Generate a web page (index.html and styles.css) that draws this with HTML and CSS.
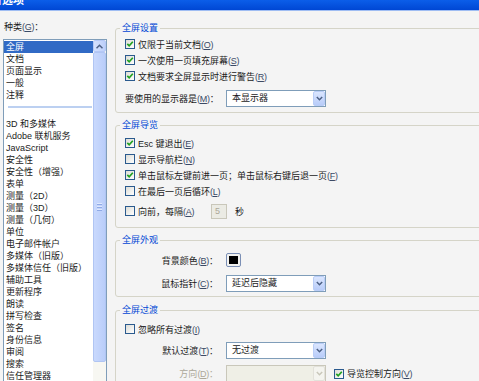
FILE: index.html
```html
<!doctype html>
<html>
<head>
    <meta charset="utf-8" />
    <title>首选项</title>
    <link rel="stylesheet" href="styles.css">
</head>
<body>
    <div class="titlebar"><span>首选项</span></div>

    <div class="dialog">
        <div class="side">
            <div class="cat-label">种类<span class="mn">(<u>G</u>)</span>：</div>
            <div class="listbox">
                <ul class="items">
                    <li class="on">全屏</li>
                    <li>文档</li>
                    <li>页面显示</li>
                    <li>一般</li>
                    <li>注释</li>
                    <li class="sep"></li>
                    <li>3D 和多媒体</li>
                    <li>Adobe 联机服务</li>
                    <li>JavaScript</li>
                    <li>安全性</li>
                    <li>安全性（增强）</li>
                    <li>表单</li>
                    <li>测量（2D）</li>
                    <li>测量（3D）</li>
                    <li>测量（几何）</li>
                    <li>单位</li>
                    <li>电子邮件帐户</li>
                    <li>多媒体（旧版）</li>
                    <li>多媒体信任（旧版）</li>
                    <li>辅助工具</li>
                    <li>更新程序</li>
                    <li>朗读</li>
                    <li>拼写检查</li>
                    <li>签名</li>
                    <li>身份信息</li>
                    <li>审阅</li>
                    <li>搜索</li>
                    <li>信任管理器</li>
                    <li>跟踪器</li>
                </ul>
                <div class="scrollbar">
                    <div class="sb-up">
                        <svg width="7" height="5" viewBox="0 0 7 5"><path d="M0.5 4.2 L3.5 1.2 L6.5 4.2" fill="none" stroke="#4d6185" stroke-width="1.5"/></svg>
                    </div>
                    <div class="sb-thumb"><i></i><i></i><i></i></div>
                    <div class="sb-track"></div>
                </div>
            </div>
        </div>

        <div class="main">
            <div class="group g1">
                <div class="group-title">全屏设置</div>
                <div class="rows">
                    <div class="row"><span class="cb checked"></span><span>仅限于当前文档<span class="mn">(<u>O</u>)</span></span></div>
                    <div class="row"><span class="cb checked"></span><span>一次使用一页填充屏幕<span class="mn">(<u>S</u>)</span></span></div>
                    <div class="row"><span class="cb checked"></span><span>文档要求全屏显示时进行警告<span class="mn">(<u>R</u>)</span></span></div>
                </div>
                <div class="field">
                    <span class="lbl left">要使用的显示器是<span class="mn">(<u>M</u>)</span>：</span>
                    <div class="combo"><span class="combo-text">本显示器</span><span class="combo-btn"></span></div>
                </div>
            </div>

            <div class="group g2">
                <div class="group-title">全屏导览</div>
                <div class="rows">
                    <div class="row"><span class="cb checked"></span><span>Esc 键退出<span class="mn">(<u>E</u>)</span></span></div>
                    <div class="row"><span class="cb"></span><span>显示导航栏<span class="mn">(<u>N</u>)</span></span></div>
                    <div class="row"><span class="cb checked"></span><span>单击鼠标左键前进一页；单击鼠标右键后退一页<span class="mn">(<u>F</u>)</span></span></div>
                    <div class="row"><span class="cb"></span><span>在最后一页后循环<span class="mn">(<u>L</u>)</span></span></div>
                </div>
                <div class="row interval">
                    <span class="cb"></span><span class="interval-text">向前，每隔<span class="mn">(<u>A</u>)</span></span>
                    <span class="num">5</span>
                    <span class="sec">秒</span>
                </div>
            </div>

            <div class="group g3">
                <div class="group-title">全屏外观</div>
                <div class="field swatch-row">
                    <span class="lbl">背景颜色<span class="mn">(<u>B</u>)</span>：</span>
                    <span class="swatch"><i></i></span>
                </div>
                <div class="field pointer-row">
                    <span class="lbl">鼠标指针<span class="mn">(<u>C</u>)</span>：</span>
                    <div class="combo"><span class="combo-text">延迟后隐藏</span><span class="combo-btn"></span></div>
                </div>
            </div>

            <div class="group g4">
                <div class="group-title">全屏过渡</div>
                <div class="row"><span class="cb"></span><span>忽略所有过渡<span class="mn">(<u>I</u>)</span></span></div>
                <div class="field trans-row">
                    <span class="lbl">默认过渡<span class="mn">(<u>T</u>)</span>：</span>
                    <div class="combo"><span class="combo-text">无过渡</span><span class="combo-btn"></span></div>
                </div>
                <div class="field dir-row">
                    <span class="lbl off">方向<span class="mn">(<u>D</u>)</span>：</span>
                    <div class="combo disabled"><span class="combo-text"></span><span class="combo-btn"></span></div>
                    <span class="row nav-dir"><span class="cb checked"></span><span>导览控制方向<span class="mn">(<u>V</u>)</span></span></span>
                </div>
            </div>
        </div>
    </div>
</body>
</html>
```

FILE: styles.css
```css
html, body{
    margin:0;
    padding:0;
}
body{
    width:479px;
    height:381px;
    overflow:hidden;
    background:#f4f4f4;
    color:#1a1a1a;
    font-family:"Liberation Sans", "Noto Sans CJK SC", sans-serif;
    font-size:9px;
    text-autospace:no-autospace;
}
u{
    text-underline-offset:1px;
}
.mn{
    font-family:"Liberation Sans", sans-serif;
    letter-spacing:-0.3px;
    color:#3a4a66;
}

.titlebar{
    height:10px;
    overflow:hidden;
    background:linear-gradient(#0b5ee9, #0047d4);
    border-bottom:1px solid #9fbdf3;
}
.titlebar span{
    display:block;
    margin:-7px 0 0 -9px;
    line-height:14px;
    font-size:11px;
    font-weight:bold;
    color:#fff;
}

.dialog{
    display:flex;
}

/* 左侧种类列表 */
.side{
    flex:none;
    margin-left:3px;
    width:104px;
}
.cat-label{
    margin-top:10px;
    margin-bottom:6px;
    padding-left:1px;
    line-height:12px;
}
.listbox{
    display:flex;
    height:360px;
    border:1px solid #7f9db9;
    background:#fff;
}
.items{
    flex:1;
    margin:0;
    padding:1px 0 0 0;
    list-style:none;
}
.items li{
    height:12px;
    line-height:12px;
    padding-left:2px;
    white-space:nowrap;
}
.items li.on{
    background:#316ac5;
    color:#fff;
}
.items li.sep::after{
    content:"";
    display:block;
    margin:5px 1px 0 2px;
    height:2px;
    background:#bcd0f1;
}
.scrollbar{
    flex:none;
    width:13px;
    display:flex;
    flex-direction:column;
    background:#f7f7f2;
}
.sb-up{
    height:12px;
    display:flex;
    align-items:center;
    justify-content:center;
    box-sizing:border-box;
    border:1px solid #b4c8f6;
    border-radius:2px;
    background:linear-gradient(90deg, #d6e2fe, #bccffa);
}
.sb-thumb{
    height:310px;
    box-sizing:border-box;
    border:1px solid #b0c5f3;
    border-radius:2px;
    background:linear-gradient(90deg, #c9d9fd, #b9cdf9);
    display:flex;
    flex-direction:column;
    align-items:center;
    justify-content:center;
    gap:1px;
}
.sb-thumb i{
    display:block;
    width:5px;
    height:1px;
    background:#dfe8fd;
    border-bottom:1px solid #8faae6;
}
.sb-track{
    flex:1;
}

/* 右侧分组 */
.main{
    flex:none;
    margin-left:8px;
    padding-top:17px;
    width:390px;
}
.group{
    border:1px solid #d5d4c8;
    border-radius:3px;
    padding:0 0 0 9px;
    margin-bottom:12px;
}
.group-title{
    margin:-7px 0 0 -5px;
    padding:0 2px;
    width:fit-content;
    line-height:12px;
    background:#f4f4f4;
    color:#0046d5;
}
.rows{
    display:flex;
    flex-direction:column;
}
.row{
    display:flex;
    align-items:center;
    height:16px;
    white-space:nowrap;
}
.cb{
    display:inline-block;
    flex:none;
    width:10px;
    height:10px;
    margin-right:3px;
    box-sizing:border-box;
    border:1px solid #2a5a8e;
    background:linear-gradient(135deg, #dcdcd6, #fff);
}
.cb.checked{
    background:url("data:image/svg+xml;utf8,<svg xmlns='http://www.w3.org/2000/svg' width='8' height='8' viewBox='0 0 8 8'><path d='M1.3 3.8 L3.2 5.8 L6.8 1.8' fill='none' stroke='%2321a121' stroke-width='1.7'/></svg>") center/8px 8px no-repeat, linear-gradient(135deg, #dcdcd6, #fff);
}

.field{
    display:flex;
    align-items:center;
    gap:8px;
    white-space:nowrap;
}
.lbl{
    width:93px;
    flex:none;
    text-align:right;
}
.lbl.left{
    text-align:left;
}
.lbl.off, .lbl.off .mn{
    color:#aca899;
}
.combo{
    flex:none;
    display:flex;
    width:100px;
    height:17px;
    box-sizing:border-box;
    border:1px solid #7f9db9;
    background:#fff;
}
.combo-text{
    flex:1;
    padding-left:5px;
    line-height:15px;
}
.combo-btn{
    width:12px;
    box-sizing:border-box;
    border:1px solid #b9cdf7;
    border-radius:2px;
    background:url("data:image/svg+xml;utf8,<svg xmlns='http://www.w3.org/2000/svg' width='7' height='5' viewBox='0 0 7 5'><path d='M0.8 1 L3.5 3.7 L6.2 1' fill='none' stroke='%234d6185' stroke-width='1.5'/></svg>") center no-repeat, linear-gradient(#dbe6fe, #b8ccf9);
}
.combo.disabled{
    border-color:#c9c7ba;
    background:#efefe6;
}
.combo.disabled .combo-btn{
    border-color:#e2e1da;
    background:url("data:image/svg+xml;utf8,<svg xmlns='http://www.w3.org/2000/svg' width='7' height='5' viewBox='0 0 7 5'><path d='M0.8 1 L3.5 3.7 L6.2 1' fill='none' stroke='%23c9c7ba' stroke-width='1.5'/></svg>") center no-repeat, #f4f4ef;
}

/* 各组间距 */
.g1 .rows{ margin-top:2px; }
.g1 .field{ margin-top:6px; height:17px; }
.g1{ padding-bottom:5px; }

.g2 .rows{ margin-top:4px; }
.g2 .interval{ margin-top:4px; }
.g2{ padding-bottom:8px; }
.interval-text{
    width:70px;
}
.num{
    width:16px;
    height:15px;
    margin-left:3px;
    box-sizing:border-box;
    border:1px solid #c9c7ba;
    background:#ebebe4;
    color:#aca899;
    padding-left:3px;
    line-height:13px;
}
.sec{
    margin-left:8px;
}

.g3 .swatch-row{ margin-top:6px; height:16px; }
.g3 .pointer-row{ margin-top:7px; height:17px; }
.g3{ padding-bottom:4px; margin-bottom:13px; }
.swatch{
    width:15px;
    height:14px;
    box-sizing:border-box;
    border:1px solid #7b8fb5;
    border-radius:2px;
    background:#f2f2ef;
    display:flex;
    align-items:center;
    justify-content:center;
}
.swatch i{
    display:block;
    width:9px;
    height:8px;
    background:#000;
}

.g4 .row{ margin-top:5px; }
.g4 .trans-row{ margin-top:5px; height:17px; }
.g4 .dir-row{ margin-top:6px; height:17px; }
.g4 .nav-dir{ margin-top:0; }
.g4{ height:80px; }
```
